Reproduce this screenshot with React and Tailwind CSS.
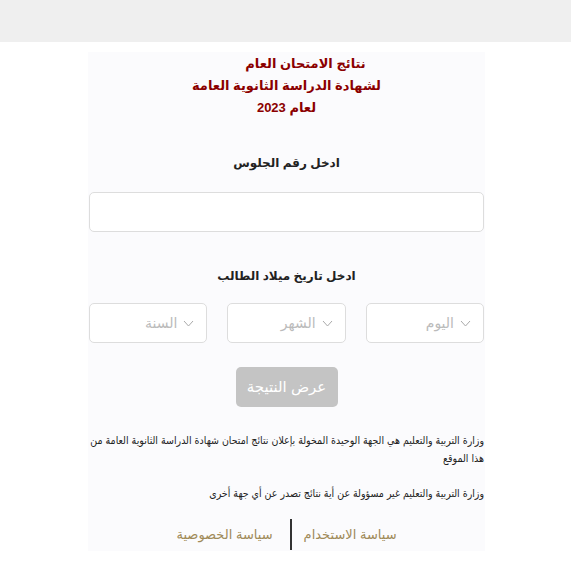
export default function App() {
  const selects = ["اليوم", "الشهر", "السنة"];

  return (
    <div
      className="min-h-[571px] bg-white"
      style={{ fontFamily: '"Liberation Sans", "DejaVu Sans", sans-serif' }}
    >
      <div className="h-[42px] bg-[#efefef]" />

      <div
        dir="rtl"
        className="mt-[10px] ml-[88px] w-[397px] bg-[#fbfbfd] px-px pt-[1px] pb-[1px]"
      >
        <div className="text-center text-[13px] font-bold leading-[22px] text-[#8b0000]">
          <p className="pl-[38px]">نتائج الامتحان العام</p>
          <p>لشهادة الدراسة الثانوية العامة</p>
          <p>لعام 2023</p>
        </div>

        <p className="mt-[35px] text-center text-[12px] font-bold text-[#222]">
          ادخل رقم الجلوس
        </p>

        <input
          type="text"
          className="mt-[20px] block h-[40px] w-full rounded-[5px] border border-[#dddddd] bg-white px-3 outline-none"
        />

        <p className="mt-[35px] text-center text-[12px] font-bold text-[#222]">
          ادخل تاريخ ميلاد الطالب
        </p>

        <div className="mt-[18px] flex gap-[20px]">
          {selects.map((label) => (
            <div
              key={label}
              className="flex h-[40px] flex-1 items-center gap-[6px] rounded-[5px] border border-[#dddddd] bg-white pr-[12px] text-[14px] text-[#bbbbbb]"
            >
              <svg width="11" height="7" viewBox="0 0 11 7" fill="none">
                <path d="M1 1l4.5 5L10 1" stroke="#aaaaaa" strokeWidth="1" />
              </svg>
              <span>{label}</span>
            </div>
          ))}
        </div>

        <div className="mt-[24px] flex justify-center">
          <button
            type="button"
            className="h-[40px] w-[102px] rounded-[5px] bg-[#c4c4c4] text-[15px] text-white"
          >
            عرض النتيجة
          </button>
        </div>

        <div
          className="text-[10.5px] leading-[18px] text-[#222]"
          style={{ fontFamily: '"DejaVu Sans Condensed", "DejaVu Sans", sans-serif' }}
        >
          <p className="mt-[24px]">
            وزارة التربية والتعليم هي الجهة الوحيدة المخولة بإعلان نتائج امتحان شهادة الدراسة الثانوية العامة من هذا الموقع
          </p>
          <p className="mt-[17px]">
            وزارة التربية والتعليم غير مسؤولة عن أية نتائج تصدر عن أي جهة أخرى
          </p>
        </div>

        <div className="mt-[17px] flex items-center justify-center text-[13px] text-[#a08a58]">
          <a href="#" className="pl-[12px] pr-[8px]">سياسة الاستخدام</a>
          <span className="h-[31px] w-[2px] bg-[#333333]" />
          <a href="#" className="pl-[8px] pr-[17px]">سياسة الخصوصية</a>
        </div>
      </div>
    </div>
  );
}
